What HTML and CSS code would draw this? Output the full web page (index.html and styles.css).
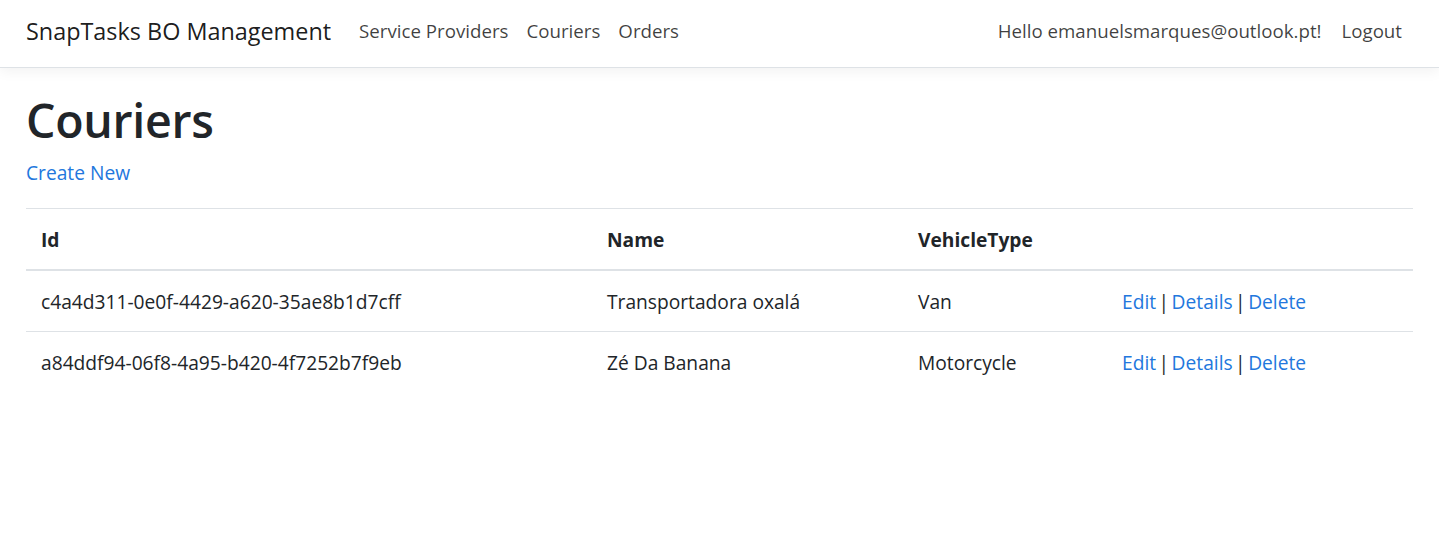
FILE: index.html
```html
<!DOCTYPE html>
<html lang="en">
<head>
<meta charset="utf-8">
<title>Couriers - SnapTasks BO Management</title>
<link rel="stylesheet" href="styles.css">
</head>
<body>
<header class="navbar">
  <div class="nav-left">
    <a class="brand" href="#">SnapTasks BO Management</a>
    <nav class="nav-links">
      <a class="nav-link" href="#">Service Providers</a>
      <a class="nav-link" href="#">Couriers</a>
      <a class="nav-link" href="#">Orders</a>
    </nav>
  </div>
  <div class="nav-right">
    <span class="nav-link">Hello emanuelsmarques@outlook.pt!</span>
    <a class="nav-link" href="#">Logout</a>
  </div>
</header>
<main class="content">
  <h1 class="title">Couriers</h1>
  <p class="create"><a class="link" href="#">Create New</a></p>
  <table class="table">
    <thead>
      <tr>
        <th class="col-id">Id</th>
        <th class="col-name">Name</th>
        <th class="col-type">VehicleType</th>
        <th class="col-actions"></th>
      </tr>
    </thead>
    <tbody>
      <tr>
        <td>c4a4d311-0e0f-4429-a620-35ae8b1d7cff</td>
        <td>Transportadora oxalá</td>
        <td>Van</td>
        <td class="actions"><a class="link" href="#">Edit</a> | <a class="link" href="#">Details</a> | <a class="link" href="#">Delete</a></td>
      </tr>
      <tr>
        <td>a84ddf94-06f8-4a95-b420-4f7252b7f9eb</td>
        <td>Zé Da Banana</td>
        <td>Motorcycle</td>
        <td class="actions"><a class="link" href="#">Edit</a> | <a class="link" href="#">Details</a> | <a class="link" href="#">Delete</a></td>
      </tr>
    </tbody>
  </table>
</main>
</body>
</html>
```
FILE: styles.css
```css
* { box-sizing: border-box; }
html, body { margin: 0; padding: 0; }
body {
  font-family: "Open Sans", "Noto Sans", sans-serif;
  font-size: 19.2px;
  color: #212529;
  background: #fff;
}
a { text-decoration: none; }

.navbar {
  height: 68px;
  display: flex;
  align-items: center;
  justify-content: space-between;
  padding: 0 26px 6px;
  background: #fff;
  border-bottom: 1px solid #dee2e6;
  box-shadow: 0 4px 12px rgba(0,0,0,0.05);
  position: relative;
}
.nav-left, .nav-right, .nav-links {
  display: flex;
  align-items: center;
}
.brand {
  font-size: 23.4px;
  color: rgba(0,0,0,0.9);
  margin-right: 19px;
}
.nav-link {
  font-size: 18.7px;
  color: rgba(0,0,0,0.75);
  padding: 0 10px;
}
.nav-links .nav-link { padding: 0 9px; }
.nav-right .nav-link:last-child { padding-right: 11px; }

.content {
  padding: 0 26px;
}
.title {
  margin: 0;
  padding-top: 25px;
  font-size: 46.5px;
  font-weight: 600;
  line-height: 1.2;
  letter-spacing: -0.3px;
}
.create {
  margin: 9px 0 20px;
  line-height: 30px;
}
.link { color: #2277dd; }

.table {
  width: 100%;
  border-collapse: collapse;
}
.table th, .table td {
  text-align: left;
  padding: 16px 15px 14px;
  line-height: 30px;
  border-top: 1px solid #dee2e6;
  vertical-align: top;
}
.table th { font-weight: 700; }
.table thead th {
  border-bottom: 2px solid #dee2e6;
}
.table .actions { word-spacing: -2.5px; }
.col-id { width: 566px; }
.col-name { width: 311px; }
.col-type { width: 204px; }
```
